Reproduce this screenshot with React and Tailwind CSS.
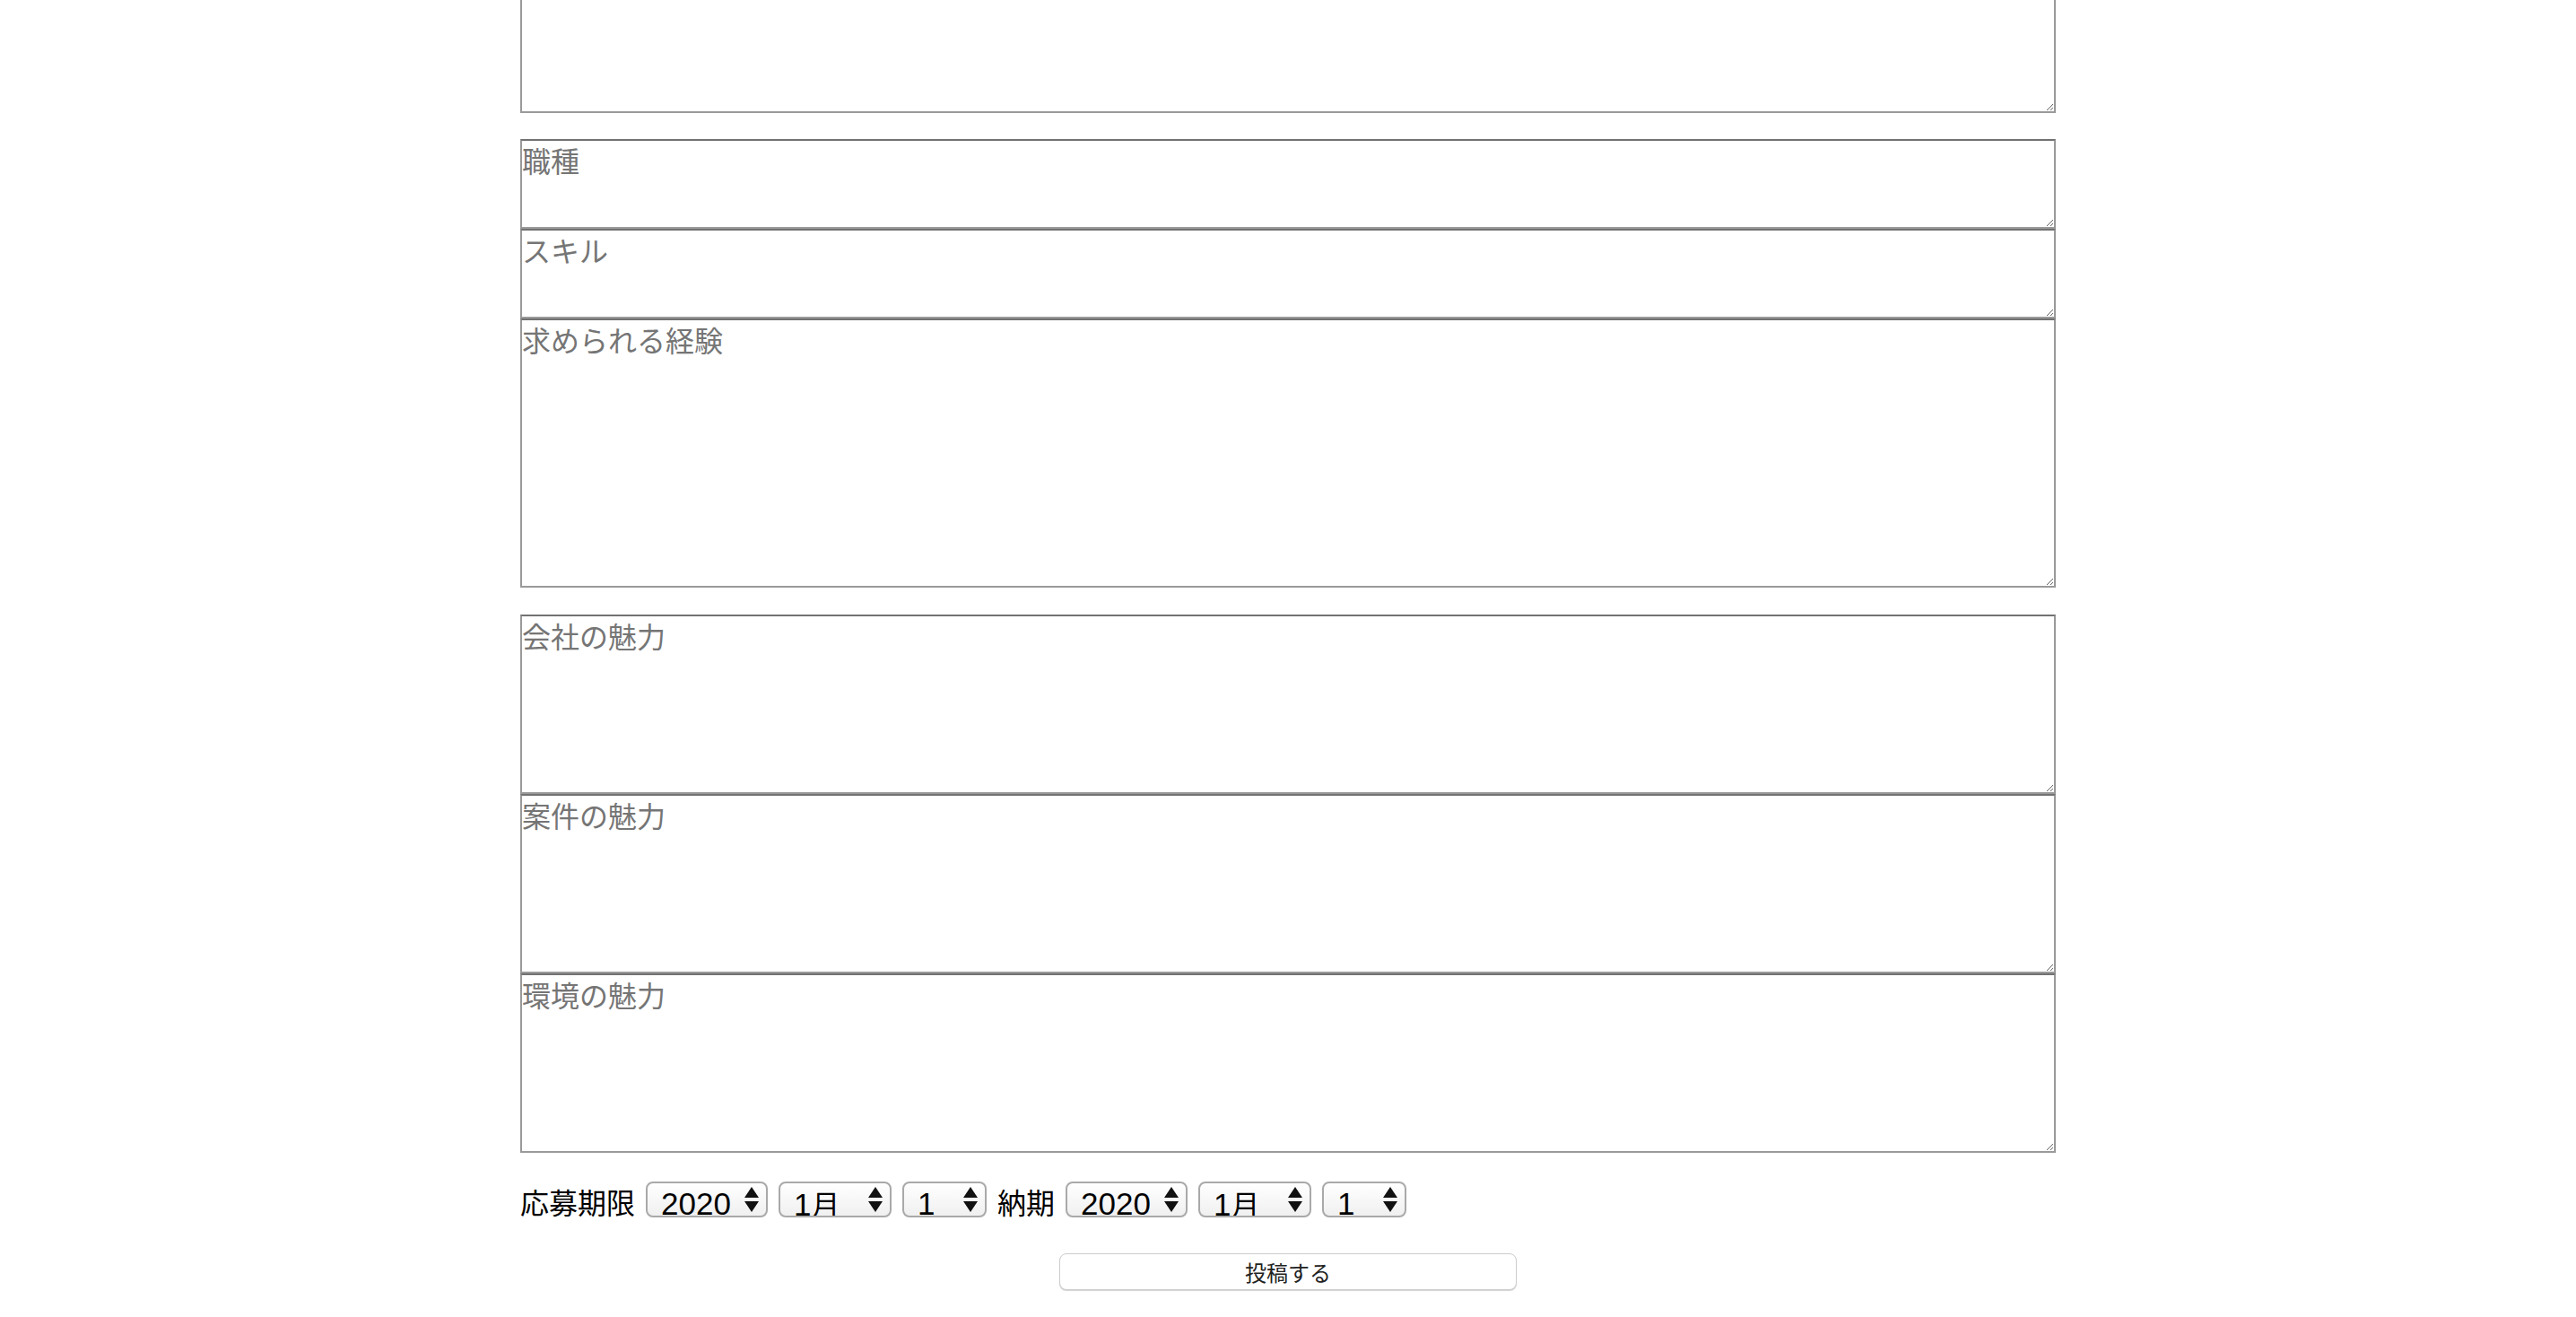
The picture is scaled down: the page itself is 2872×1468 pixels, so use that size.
import React from 'react';

const CJK = "font-['Noto_Sans_CJK_JP',sans-serif]";

const Field = ({ placeholder, h, className = '' }) => (
  <textarea
    placeholder={placeholder}
    className={`block w-full ${h} bg-white border-2 border-[#9a9a9a] border-t-[#727272] pt-0 px-0 text-[32px] leading-[42px] text-black placeholder:text-[#757575] font-['Noto_Sans_CJK_JP',sans-serif] ${className}`}
  />
);

const Select = ({ num, suffix, w }) => (
  <div
    className={`flex ${w} h-[40px] shrink-0 overflow-hidden rounded-[8px] border-2 border-[#a9a9a9] bg-linear-to-b from-white to-[#f0f0f0] pl-[15px] pr-[8px]`}
  >
    <span className="pt-[5px] text-[35px] leading-[35px] text-black whitespace-nowrap font-['Liberation_Sans',sans-serif]">
      {num}
      {suffix && <span className="text-[32px] font-['Noto_Sans_CJK_JP',sans-serif]">{suffix}</span>}
    </span>
    <svg className="ml-auto mt-[4px] shrink-0" width="16" height="28" viewBox="0 0 16 28">
      <path d="M8 0L16 12H0Z" fill="#111" />
      <path d="M0 16H16L8 28Z" fill="#111" />
    </svg>
  </div>
);

const DateGroup = ({ label }) => (
  <>
    <span className={`${CJK} text-[32px] leading-[40px] mt-[2px] text-black whitespace-nowrap`}>{label}</span>
    <Select num="2020" w="w-[136px]" />
    <Select num="1" suffix="月" w="w-[126px]" />
    <Select num="1" w="w-[94px]" />
  </>
);

const App = () => {
  return (
    <div className="w-full min-h-[1468px] bg-white">
      <div className="w-[1712px] mx-auto flex flex-col">
        <Field h="h-[126px]" className="border-t-0" />

        <div className="mt-[29px] flex flex-col">
          <Field placeholder="職種" h="h-[100px]" />
          <Field placeholder="スキル" h="h-[100px]" />
          <Field placeholder="求められる経験" h="h-[300px]" />
        </div>

        <div className="mt-[30px] flex flex-col">
          <Field placeholder="会社の魅力" h="h-[200px]" />
          <Field placeholder="案件の魅力" h="h-[200px]" />
          <Field placeholder="環境の魅力" h="h-[200px]" />
        </div>

        <div className="mt-[32px] flex items-start gap-[12px]">
          <DateGroup label="応募期限" />
          <DateGroup label="納期" />
        </div>

        <button
          className={`self-center mt-[38px] w-[510px] h-[41px] rounded-[8px] border border-[#cdcdcd] bg-white shadow-[0_1px_1px_rgba(0,0,0,0.18)] text-[24px] leading-[39px] text-[#222] ${CJK}`}
        >
          投稿する
        </button>
      </div>
    </div>
  );
};

export default App;
